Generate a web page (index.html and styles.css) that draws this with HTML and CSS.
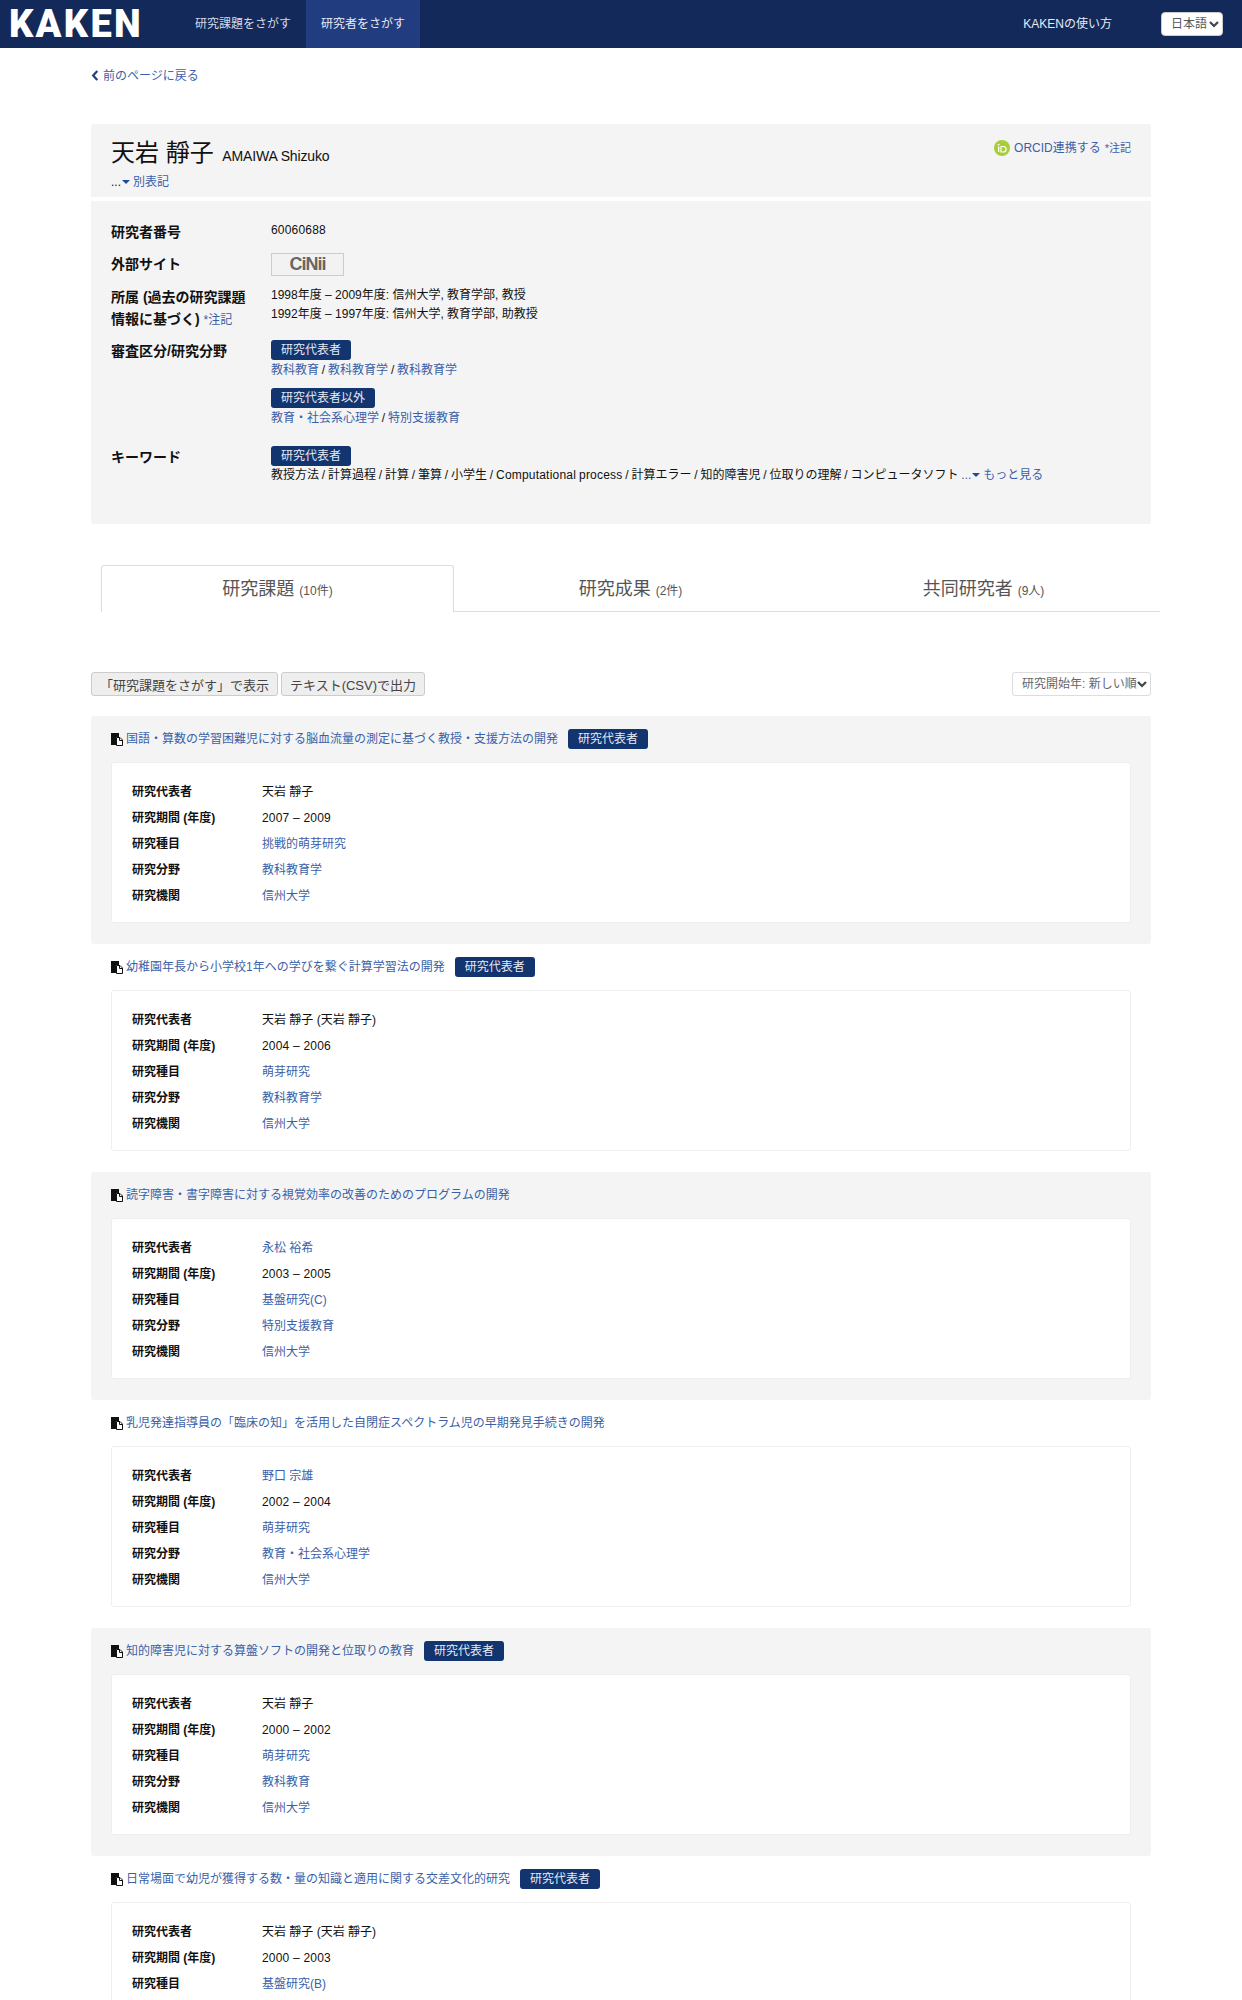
FILE: index.html
```html
<!DOCTYPE html>
<html lang="ja">
<head>
  <meta charset="UTF-8">
  <title>KAKEN</title>
  <link rel="stylesheet" href="styles.css">
</head>
<body>

<!--ヘッダー-->
<header class="topbar">
  <a class="logo" href="#">KAKEN</a>
  <nav class="topnav">
    <a href="#">研究課題をさがす</a>
    <a class="now" href="#">研究者をさがす</a>
  </nav>
  <a class="howto" href="#">KAKENの使い方</a>
  <select class="pick lang"><option>日本語</option></select>
</header>

<div class="container">

  <p class="back"><a href="#"><svg class="chev" viewBox="0 0 8 12" width="8" height="11"><path d="M6.500 1 L2 6 L6.500 11" fill="none" stroke="#1f3f80" stroke-width="2.400"/></svg>前のページに戻る</a></p>

  <!--名前-->
  <section class="namebox">
    <div>
      <h1>天岩 靜子 <small>AMAIWA Shizuko</small></h1>
      <p class="alt">...<span class="caret"></span><a href="#">別表記</a></p>
    </div>
    <p class="orcid">
      <svg viewBox="0 0 16 16" width="16" height="16"><circle cx="8" cy="8" r="8" fill="#a6ce39"/><rect x="4" y="6.500" width="1.300" height="5.500" fill="#fff"/><circle cx="4.600" cy="4.600" r=".9" fill="#fff"/><path d="M7 6.500h2.400a2.750 2.750 0 0 1 0 5.500H7z" fill="none" stroke="#fff" stroke-width="1.200"/></svg>
      <a href="#">ORCID連携する</a> <a class="note" href="#">*注記</a>
    </p>
  </section>

  <!--基本情報-->
  <section class="infobox">
    <div class="info-row">
      <div class="info-label">研究者番号</div>
      <div class="info-val num">60060688</div>
    </div>
    <div class="info-row row-site">
      <div class="info-label">外部サイト</div>
      <div class="info-val"><a class="cinii" href="#">CiNii</a></div>
    </div>
    <div class="info-row row-org">
      <div class="info-label">所属 (過去の研究課題<br>情報に基づく) <a class="note" href="#">*注記</a></div>
      <div class="info-val">
        <div class="line">1998年度 – 2009年度: 信州大学, 教育学部, 教授</div>
        <div class="line">1992年度 – 1997年度: 信州大学, 教育学部, 助教授</div>
      </div>
    </div>
    <div class="info-row row-field">
      <div class="info-label">審査区分/研究分野</div>
      <div class="info-val">
        <div class="group">
          <span class="tag">研究代表者</span>
          <div class="line slash"><a href="#">教科教育</a> / <a href="#">教科教育学</a> / <a href="#">教科教育学</a></div>
        </div>
        <div class="group">
          <span class="tag">研究代表者以外</span>
          <div class="line slash"><a href="#">教育・社会系心理学</a> / <a href="#">特別支援教育</a></div>
        </div>
      </div>
    </div>
    <div class="info-row row-key">
      <div class="info-label">キーワード</div>
      <div class="info-val">
        <span class="tag">研究代表者</span>
        <div class="line slash">教授方法 / 計算過程 / 計算 / 筆算 / 小学生 / <span class="num">Computational process</span> / 計算エラー / 知的障害児 / 位取りの理解 / コンピュータソフト <a href="#">...<span class="caret"></span>もっと見る</a></div>
      </div>
    </div>
  </section>

  <!--タブ-->
  <ul class="tabs">
    <li class="now">研究課題 <small>(10件)</small></li>
    <li>研究成果 <small>(2件)</small></li>
    <li>共同研究者 <small>(9人)</small></li>
  </ul>

  <div class="tools">
    <button>「研究課題をさがす」で表示</button>
    <button>テキスト(CSV)で出力</button>
    <select class="pick sort"><option>研究開始年: 新しい順</option></select>
  </div>

  <!--書類アイコン-->
  <svg class="sprite" width="0" height="0"><symbol id="doc" viewBox="0 0 12 13"><path d="M0 0h8v4H5v8H0z" fill="#111"/><path d="M5.500 4.500h3.500l2.500 2.500v5.500h-6z" fill="#fff" stroke="#111"/><path d="M8.500 4.500v3h3" fill="none" stroke="#111"/></symbol></svg>

  <!--研究課題-->
  <article class="item odd">
    <h3><svg class="doc" width="12" height="13"><use href="#doc"/></svg><a href="#">国語・算数の学習困難児に対する脳血流量の測定に基づく教授・支援方法の開発</a><span class="tag">研究代表者</span></h3>
    <dl class="card">
      <div><dt>研究代表者</dt><dd>天岩 靜子</dd></div>
      <div><dt>研究期間 (年度)</dt><dd class="num">2007 – 2009</dd></div>
      <div><dt>研究種目</dt><dd><a href="#">挑戦的萌芽研究</a></dd></div>
      <div><dt>研究分野</dt><dd><a href="#">教科教育学</a></dd></div>
      <div><dt>研究機関</dt><dd><a href="#">信州大学</a></dd></div>
    </dl>
  </article>

  <article class="item">
    <h3><svg class="doc" width="12" height="13"><use href="#doc"/></svg><a href="#">幼稚園年長から小学校1年への学びを繋ぐ計算学習法の開発</a><span class="tag">研究代表者</span></h3>
    <dl class="card">
      <div><dt>研究代表者</dt><dd>天岩 靜子 (天岩 靜子)</dd></div>
      <div><dt>研究期間 (年度)</dt><dd class="num">2004 – 2006</dd></div>
      <div><dt>研究種目</dt><dd><a href="#">萌芽研究</a></dd></div>
      <div><dt>研究分野</dt><dd><a href="#">教科教育学</a></dd></div>
      <div><dt>研究機関</dt><dd><a href="#">信州大学</a></dd></div>
    </dl>
  </article>

  <article class="item odd">
    <h3><svg class="doc" width="12" height="13"><use href="#doc"/></svg><a href="#">読字障害・書字障害に対する視覚効率の改善のためのプログラムの開発</a></h3>
    <dl class="card">
      <div><dt>研究代表者</dt><dd><a href="#">永松 裕希</a></dd></div>
      <div><dt>研究期間 (年度)</dt><dd class="num">2003 – 2005</dd></div>
      <div><dt>研究種目</dt><dd><a href="#">基盤研究(C)</a></dd></div>
      <div><dt>研究分野</dt><dd><a href="#">特別支援教育</a></dd></div>
      <div><dt>研究機関</dt><dd><a href="#">信州大学</a></dd></div>
    </dl>
  </article>

  <article class="item">
    <h3><svg class="doc" width="12" height="13"><use href="#doc"/></svg><a href="#">乳児発達指導員の「臨床の知」を活用した自閉症スペクトラム児の早期発見手続きの開発</a></h3>
    <dl class="card">
      <div><dt>研究代表者</dt><dd><a href="#">野口 宗雄</a></dd></div>
      <div><dt>研究期間 (年度)</dt><dd class="num">2002 – 2004</dd></div>
      <div><dt>研究種目</dt><dd><a href="#">萌芽研究</a></dd></div>
      <div><dt>研究分野</dt><dd><a href="#">教育・社会系心理学</a></dd></div>
      <div><dt>研究機関</dt><dd><a href="#">信州大学</a></dd></div>
    </dl>
  </article>

  <article class="item odd">
    <h3><svg class="doc" width="12" height="13"><use href="#doc"/></svg><a href="#">知的障害児に対する算盤ソフトの開発と位取りの教育</a><span class="tag">研究代表者</span></h3>
    <dl class="card">
      <div><dt>研究代表者</dt><dd>天岩 靜子</dd></div>
      <div><dt>研究期間 (年度)</dt><dd class="num">2000 – 2002</dd></div>
      <div><dt>研究種目</dt><dd><a href="#">萌芽研究</a></dd></div>
      <div><dt>研究分野</dt><dd><a href="#">教科教育</a></dd></div>
      <div><dt>研究機関</dt><dd><a href="#">信州大学</a></dd></div>
    </dl>
  </article>

  <article class="item">
    <h3><svg class="doc" width="12" height="13"><use href="#doc"/></svg><a href="#">日常場面で幼児が獲得する数・量の知識と適用に関する交差文化的研究</a><span class="tag">研究代表者</span></h3>
    <dl class="card">
      <div><dt>研究代表者</dt><dd>天岩 靜子 (天岩 靜子)</dd></div>
      <div><dt>研究期間 (年度)</dt><dd class="num">2000 – 2003</dd></div>
      <div><dt>研究種目</dt><dd><a href="#">基盤研究(B)</a></dd></div>
    </dl>
  </article>

</div>

</body>
</html>
```

FILE: styles.css
```css
* {
  margin: 0;
  padding: 0;
  box-sizing: border-box;
  list-style: none;
}

html {
  height: 2000px;
  overflow: hidden;
}

body {
  font-family: "Liberation Sans", "Noto Sans CJK JP", sans-serif;
  font-size: 12px;
  line-height: 18px;
  color: #111;
  background-color: #fff;
}

a {
  color: #3b5fa8;
  text-decoration: none;
}

.num {
  letter-spacing: .2px;
}

.sprite {
  display: block;
}

/*セレクトは矢印を自前で描く*/
.pick {
  appearance: none;
  font-family: inherit;
  font-size: 12px;
  background-color: #fff;
  background-image: url("data:image/svg+xml,%3Csvg xmlns='http://www.w3.org/2000/svg' width='10' height='7'%3E%3Cpath d='M1 1l4 4 4-4' fill='none' stroke='%23444' stroke-width='2.200'/%3E%3C/svg%3E");
  background-repeat: no-repeat;
  background-position: right 3px center;
  padding-left: 9px;
}

/*ヘッダー*/
.topbar {
  height: 48px;
  background-color: #12295a;
  display: flex;
  align-items: center;
  padding-left: 9px;
}

.logo {
  width: 171px;
  font-family: "Roboto", sans-serif;
  font-weight: 900;
  font-size: 38px;
  letter-spacing: 2.300px;
  color: #fff;
}

.topnav {
  display: flex;
  height: 48px;
}

.topnav a {
  padding: 0 15px;
  line-height: 48px;
  color: #d5dae6;
}

.topnav a.now {
  background-color: #213d7f;
  color: #e8ebf3;
}

.howto {
  margin-left: auto;
  color: #e8ebf3;
}

.lang {
  width: 62px;
  height: 24px;
  margin: 0 19px 0 49px;
  color: #555;
  border: 1px solid #ccc;
  border-radius: 4px;
}

.container {
  width: 1060px;
  margin-left: 91px;
}

.back {
  padding-top: 19px;
  height: 76px;
}

.chev {
  margin-right: 4px;
  vertical-align: -1px;
}

/*名前*/
.namebox {
  height: 73px;
  background-color: #f4f4f4;
  border-radius: 3px 3px 0 0;
  padding: 13px 20px 0;
  display: flex;
  justify-content: space-between;
}

.namebox h1 {
  font-size: 24px;
  line-height: 32px;
  font-weight: 400;
}

.namebox h1 small {
  font-size: 14px;
  letter-spacing: -.15px;
  margin-left: 2px;
}

.alt {
  padding-top: 1px;
}

.caret {
  display: inline-block;
  width: 0;
  height: 0;
  margin: 0 3px 0 1px;
  border: 4px solid transparent;
  border-top: 4px solid #1f4a9a;
  border-bottom: 0;
  vertical-align: 2px;
}

.orcid {
  display: flex;
  align-items: center;
  gap: 4px;
  height: 16px;
  margin-top: 3px;
}

.orcid .note {
  font-size: 11px;
}

.note {
  color: #3b5fa8;
}

/*基本情報*/
.infobox {
  height: 323px;
  margin-top: 4px;
  background-color: #f4f4f4;
  border-radius: 0 0 3px 3px;
  padding: 20px 20px 0;
}

.info-row {
  display: flex;
}

.info-label {
  width: 160px;
  font-size: 14px;
  line-height: 22px;
  font-weight: 700;
}

.info-label .note {
  font-size: 12px;
  font-weight: 400;
}

.info-val .line {
  line-height: 19px;
}

.slash {
  word-spacing: -.5px;
}

.row-site {
  margin-top: 10px;
}

.cinii {
  display: block;
  width: 73px;
  height: 23px;
  text-align: center;
  line-height: 21px;
  font-size: 18px;
  font-weight: 700;
  letter-spacing: -1px;
  color: #666;
  background-color: #f2f2f2;
  border: 1px solid #ccc;
}

.row-org {
  margin-top: 10px;
}

.row-field {
  margin-top: 9px;
}

.row-key {
  margin-top: 10px;
}

.group {
  margin-bottom: 8px;
}

.group .line {
  margin-top: 1px;
}

.tag {
  display: inline-block;
  height: 20px;
  padding: 0 10px;
  line-height: 20px;
  color: #e6eaf3;
  background-color: #12346f;
  border-radius: 3px;
}

/*タブ*/
.tabs {
  width: 1059px;
  margin: 41px 0 0 10px;
  height: 47px;
  display: flex;
  border-bottom: 1px solid #ddd;
}

.tabs li {
  width: 353px;
  height: 47px;
  padding-top: 1px;
  text-align: center;
  font-size: 18px;
  line-height: 46px;
  color: #555;
}

.tabs li small {
  font-size: 12px;
}

.tabs li.now {
  background-color: #fff;
  border: 1px solid #ddd;
  border-bottom: 0;
  border-radius: 3px 3px 0 0;
  padding-top: 0;
}

.tools {
  margin-top: 60px;
  height: 24px;
  display: flex;
  gap: 3px;
}

.tools button {
  padding: 0 8px;
  font-family: inherit;
  font-size: 13px;
  color: #444;
  background-color: #eee;
  border: 1px solid #ccc;
  border-radius: 3px;
}

.sort {
  width: 139px;
  margin-left: auto;
  color: #666;
  border: 1px solid #ddd;
  border-radius: 3px;
}

/*研究課題*/
.sprite + .item {
  margin-top: 20px;
}

.item {
  height: 228px;
  padding: 13px 20px 0;
}

.item.odd {
  background-color: #f4f4f4;
  border-radius: 3px;
}

.item h3 {
  height: 20px;
  font-size: 12px;
  font-weight: 400;
  line-height: 20px;
  display: flex;
  align-items: center;
}

.doc {
  margin-right: 3px;
}

.item .tag {
  margin-left: 10px;
}

.card {
  height: 161px;
  margin-top: 13px;
  background-color: #fff;
  border: 1px solid #eee;
  border-radius: 3px;
  padding: 16px 20px 0;
}

.card div {
  display: flex;
  height: 26px;
  align-items: center;
}

.card dt {
  width: 130px;
  font-weight: 700;
}
```
